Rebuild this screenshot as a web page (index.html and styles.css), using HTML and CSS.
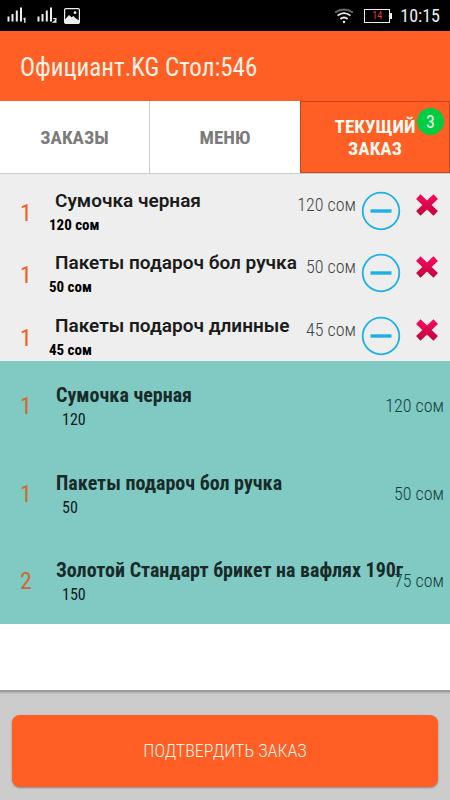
FILE: index.html
```html
<!DOCTYPE html>
<html lang="ru">
<head>
<meta charset="utf-8">
<meta name="viewport" content="width=device-width, initial-scale=1">
<title>Официант.KG</title>
<link rel="stylesheet" href="styles.css">
</head>
<body>
<svg width="0" height="0" class="defs" aria-hidden="true">
  <defs>
    <linearGradient id="red" x1="0" y1="0" x2="0" y2="1">
      <stop offset="0" stop-color="#f5085c"/>
      <stop offset="1" stop-color="#c8053f"/>
    </linearGradient>
    <symbol id="minus" viewBox="0 0 40 40">
      <circle cx="20" cy="20" r="18.3" fill="none" stroke="#1bb0ea" stroke-width="1.8"/>
      <path d="M9.5 20h21" stroke="#1bb0ea" stroke-width="3.4"/>
    </symbol>
    <symbol id="cross" viewBox="0 0 24 24">
      <path d="M3.300 3.600L20.700 20.400M20.700 3.600L3.300 20.400" fill="none" stroke="url(#red)" stroke-width="6.400"/>
    </symbol>
  </defs>
</svg>
<div class="app">
  <div class="status">
    <svg width="20" height="17" viewBox="0 0 20 17" aria-hidden="true"><path d="M1.500 14.500V9.500M5.500 14.500V7M9.800 14.500V3.500M14 14.500V.5" stroke="#eee" stroke-width="2"/><path d="M16.500 12.200l1.300-.8V15.800" fill="none" stroke="#eee" stroke-width="1.400"/></svg>
    <svg width="20" height="17" viewBox="0 0 20 17" aria-hidden="true"><path d="M1.500 14.500V9.500M5.500 14.500V7M9.800 14.500V3.500M14 14.500V.5" stroke="#eee" stroke-width="2"/><path d="M16.200 11.600h2.700v1.700l-2.200 1.700h2.900" fill="none" stroke="#eee" stroke-width="1.300"/></svg>
    <svg class="photo" width="16" height="16" viewBox="0 0 16 16" aria-hidden="true"><rect x=".6" y=".6" width="14.800" height="14.800" rx="1.200" fill="none" stroke="#eee" stroke-width="1.200"/><path d="M1 15V11.500L5 7l2.500 2.200L9.500 8l2 2.200 3.500 2V15Z" fill="#eee"/><circle cx="11" cy="4.700" r="1.400" fill="#eee"/></svg>
    <span class="spacer"></span>
    <svg width="20" height="16" viewBox="0 0 20 16" aria-hidden="true"><path d="M1 4.500Q10-1.500 19 4.500" fill="none" stroke="#666" stroke-width="1.800"/><path d="M3.600 7.600Q10 2.800 16.400 7.600M6.400 11Q10 8 13.600 11" fill="none" stroke="#eee" stroke-width="1.800"/><circle cx="10" cy="14" r="1.200" fill="#eee"/></svg>
    <span class="battery">14</span>
    <time class="clock">10:15</time>
  </div>
  <header class="header"><h1>Официант.KG Стол:546</h1></header>
  <nav class="tabs">
    <button class="tab" type="button">ЗАКАЗЫ</button>
    <button class="tab" type="button">МЕНЮ</button>
    <button class="tab active" type="button"><span>ТЕКУЩИЙ ЗАКАЗ</span><span class="badge">3</span></button>
  </nav>
  <main class="content">
    <ul class="list pending">
      <li class="row">
        <span class="qty">1</span>
        <div class="item"><span class="name">Сумочка черная</span><span class="unit">120 сом</span></div>
        <span class="price">120 сом</span>
        <button class="icon less" type="button" aria-label="Уменьшить"><svg><use href="#minus"/></svg></button>
        <button class="icon remove" type="button" aria-label="Удалить"><svg><use href="#cross"/></svg></button>
      </li>
      <li class="row">
        <span class="qty">1</span>
        <div class="item"><span class="name">Пакеты подароч бол ручка</span><span class="unit">50 сом</span></div>
        <span class="price">50 сом</span>
        <button class="icon less" type="button" aria-label="Уменьшить"><svg><use href="#minus"/></svg></button>
        <button class="icon remove" type="button" aria-label="Удалить"><svg><use href="#cross"/></svg></button>
      </li>
      <li class="row">
        <span class="qty">1</span>
        <div class="item"><span class="name">Пакеты подароч длинные</span><span class="unit">45 сом</span></div>
        <span class="price">45 сом</span>
        <button class="icon less" type="button" aria-label="Уменьшить"><svg><use href="#minus"/></svg></button>
        <button class="icon remove" type="button" aria-label="Удалить"><svg><use href="#cross"/></svg></button>
      </li>
    </ul>
    <ul class="list sent">
      <li class="row">
        <span class="qty">1</span>
        <div class="item"><span class="name">Сумочка черная</span><span class="unit">120</span></div>
        <span class="price">120 сом</span>
      </li>
      <li class="row">
        <span class="qty">1</span>
        <div class="item"><span class="name">Пакеты подароч бол ручка</span><span class="unit">50</span></div>
        <span class="price">50 сом</span>
      </li>
      <li class="row">
        <span class="qty">2</span>
        <div class="item"><span class="name">Золотой Стандарт брикет на вафлях 190г</span><span class="unit">150</span></div>
        <span class="price">75 сом</span>
      </li>
    </ul>
  </main>
  <footer class="footer"><button class="confirm" type="button">ПОДТВЕРДИТЬ ЗАКАЗ</button></footer>
</div>
</body>
</html>
```
FILE: styles.css
```css
* { box-sizing: border-box; }
body {
  margin: 0;
  background: #fff;
  font-family: "Roboto Condensed", Roboto, sans-serif;
  color: #1b1b1b;
}
button { font-family: inherit; border: 0; padding: 0; margin: 0; background: none; cursor: pointer; }
.defs { position: absolute; }
.app { min-height: 100vh; display: flex; flex-direction: column; }

.status {
  height: 31px;
  padding: 0 10px 0 7px;
  display: flex;
  align-items: center;
  gap: 10px;
  background: #000;
  color: #eee;
}
.photo { margin-left: -3px; }
.spacer { flex: 1; }
.battery {
  position: relative;
  width: 26px;
  height: 14px;
  border: 1px solid #eee;
  color: #e8304a;
  font-size: 10px;
  line-height: 12px;
  text-align: center;
}
.battery::after {
  content: "";
  position: absolute;
  left: 25px;
  top: 3px;
  width: 2px;
  height: 6px;
  background: #eee;
}
.clock { font-size: 18px; line-height: 32px; }

.header { height: 70px; padding: 4px 20px 0; display: flex; align-items: center; background: #ff5e25; }
.header h1 { margin: 0; font-size: 25px; font-weight: 400; line-height: 32px; color: #fff3e6; white-space: nowrap; }

.tabs { display: grid; grid-template-columns: repeat(3, 1fr); height: 73px; border-bottom: 1px solid #ccc; }
.tab {
  position: relative;
  padding: 2px 24px 0;
  background: #fff;
  color: #7b7b7b;
  font-size: 19px;
  font-weight: 700;
  line-height: 22px;
}
.tab:first-child { border-right: 1px solid #ccc; }
.tab.active { background: #ff5e25; color: #fffaf0; border: 1px solid #c9431a; }
.badge {
  position: absolute;
  top: 6px;
  right: 5px;
  width: 27px;
  height: 27px;
  border-radius: 50%;
  background: #0c4;
  color: #e4ffe8;
  font-size: 18px;
  font-weight: 400;
  line-height: 27px;
}

.content { flex: 1; }
.list { margin: 0; padding: 0; list-style: none; display: grid; grid-template-columns: minmax(0, 1fr); }
.row { display: flex; }
.qty { flex: none; width: 49px; padding-left: 20px; color: #f2621f; font-size: 24px; line-height: 28px; }
.item { flex: 1; min-width: 0; display: flex; flex-direction: column; white-space: nowrap; }
.name { font-weight: 700; line-height: 24px; }
.price { position: relative; font-size: 18px; font-weight: 300; line-height: 24px; white-space: nowrap; }

.pending { background: #eee; height: 187px; grid-auto-rows: 1fr; }
.pending .qty { padding-top: 25px; }
.pending .item { padding-top: 14px; }
.pending .name { padding-left: 6px; font-family: Roboto, sans-serif; font-size: 19px; font-weight: 600; line-height: 26px; }
.pending .unit { font-size: 15px; font-weight: 700; line-height: 22px; color: #000; }
.pending .price { padding-top: 19px; color: #444; }
.icon svg { display: block; width: 100%; height: 100%; }
.less { width: 40px; height: 40px; margin: 17px 0 0 5px; }
.remove { width: 24px; height: 24px; margin: 19px 11px 0 14px; }

.sent { background: #80cac3; height: 263px; grid-auto-rows: 1fr; }
.sent .qty { padding-top: 31px; color: #cd6a2b; }
.sent .item { padding-top: 22px; }
.sent .name { padding-left: 7px; font-size: 20px; color: #182b2a; }
.sent .unit { padding-left: 13px; font-size: 16px; line-height: 26px; color: #0e1918; }
.sent .price { padding: 33px 6px 0 0; color: #143e3a; }

.footer { padding: 24px 12px 13px; background: #ccc; border-top: 1px solid #999; box-shadow: inset 0 4px 3px -3px #888; }
.confirm {
  display: block;
  width: 100%;
  height: 72px;
  border-radius: 8px;
  background: #ff5e25;
  color: #fff6e8;
  font-size: 18px;
  font-weight: 300;
  line-height: 24px;
  box-shadow: 0 1px 2px #888;
}
```
